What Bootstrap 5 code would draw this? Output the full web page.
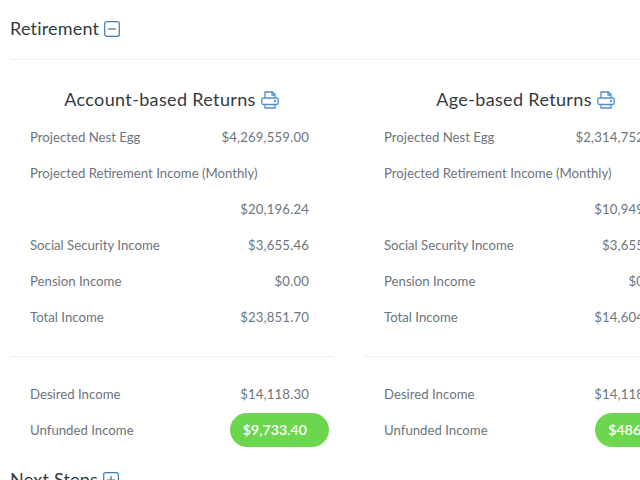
<!DOCTYPE html>
<html lang="en"><head><meta charset="utf-8"><title>Retirement</title>
<link href="https://cdn.jsdelivr.net/npm/bootstrap@5.3.0/dist/css/bootstrap.min.css" rel="stylesheet">
<style>
html,body{height:480px;overflow:hidden;background:#fff}
body{font-family:Lato,"Open Sans",sans-serif;color:#6c757d;font-size:13.2px}
.shell{padding:0 0 0 10px;width:640px;overflow:hidden}
.sec-title{font-size:18px;line-height:24px;color:#343a40;letter-spacing:.2px;font-weight:400;margin:0}
.sec-head{height:60px;border-bottom:1px solid #ebedef;padding-bottom:4px}
.sec-head2{margin-top:19px}
.tog{display:inline-block;vertical-align:-2px;margin-left:0}
.cols{display:flex;gap:30px;width:700px}
.colm{flex:0 0 324px;width:324px}
.colhead{font-size:18px;line-height:24px;color:#343a40;text-align:center;font-weight:400;margin:27px 0 0;letter-spacing:.35px;height:24px;padding-right:1px}
.prt{display:inline-block;vertical-align:-3px;margin-left:0}
.ln{display:flex;justify-content:space-between;height:36px;line-height:36px;padding:0 25px 0 20px;white-space:nowrap}
.ln.first{margin-top:8px}
.amt{letter-spacing:.15px}
.divi{border-top:1px solid #ebedef;margin:21px 0 19px}
.pill{display:inline-block;background:#6dd64f;color:#fff;height:34px;line-height:34px;border-radius:17px;padding:0 22px 0 13px;margin-right:-20px;font-size:14px;letter-spacing:.1px;-webkit-text-stroke:.2px #fff}
.pillwrap{display:flex;align-items:center}
</style></head><body>
<div class="shell">
<div class="sec-head d-flex align-items-center"><h2 class="sec-title">Retirement <svg class="tog" width="16" height="16" viewBox="0 0 16 16" fill="none" stroke="#3c7db5" stroke-width="1.2"><rect x=".7" y=".7" width="14.6" height="14.6" rx="2"/><path d="M4 8h8" stroke="#3f6f99"/></svg></h2></div>
<div class="cols">
<div class="colm">
<h3 class="colhead">Account-based Returns <svg class="prt" width="18" height="18" viewBox="0 0 18 18" fill="none" stroke="#4a90d0" stroke-width="1.3"><path d="M4 7V1h7.5L14 3.5V7"/><path d="M11 1V4h3"/><rect x=".8" y="7" width="16.4" height="6.5" rx="1.5"/><path d="M4 13.5V17h10v-3.5"/><circle cx="14" cy="10" r=".5"/></svg></h3>
<div class="ln first"><span>Projected Nest Egg</span><span class="amt">$4,269,559.00</span></div>
<div class="ln"><span>Projected Retirement Income (Monthly)</span></div>
<div class="ln justify-content-end"><span class="amt">$20,196.24</span></div>
<div class="ln"><span>Social Security Income</span><span class="amt">$3,655.46</span></div>
<div class="ln"><span>Pension Income</span><span class="amt">$0.00</span></div>
<div class="ln"><span>Total Income</span><span class="amt">$23,851.70</span></div>
<div class="divi"></div>
<div class="ln"><span>Desired Income</span><span class="amt">$14,118.30</span></div>
<div class="ln pillwrap"><span>Unfunded Income</span><span class="pill">$9,733.40</span></div>
</div>
<div class="colm">
<h3 class="colhead">Age-based Returns <svg class="prt" width="18" height="18" viewBox="0 0 18 18" fill="none" stroke="#4a90d0" stroke-width="1.3"><path d="M4 7V1h7.5L14 3.5V7"/><path d="M11 1V4h3"/><rect x=".8" y="7" width="16.4" height="6.5" rx="1.5"/><path d="M4 13.5V17h10v-3.5"/><circle cx="14" cy="10" r=".5"/></svg></h3>
<div class="ln first"><span>Projected Nest Egg</span><span class="amt">$2,314,752.00</span></div>
<div class="ln"><span>Projected Retirement Income (Monthly)</span></div>
<div class="ln justify-content-end"><span class="amt">$10,949.24</span></div>
<div class="ln"><span>Social Security Income</span><span class="amt">$3,655.46</span></div>
<div class="ln"><span>Pension Income</span><span class="amt">$0.00</span></div>
<div class="ln"><span>Total Income</span><span class="amt">$14,604.70</span></div>
<div class="divi"></div>
<div class="ln"><span>Desired Income</span><span class="amt">$14,118.30</span></div>
<div class="ln pillwrap"><span>Unfunded Income</span><span class="pill">$486.40</span></div>
</div>
</div>
<h2 class="sec-title sec-head2">Next Steps <svg class="tog" width="16" height="16" viewBox="0 0 16 16" fill="none" stroke="#3c7db5" stroke-width="1.2"><rect x=".7" y=".7" width="14.6" height="14.6" rx="2"/><path d="M4 8h8M8 4v8" stroke="#3f6f99"/></svg></h2>
</div>
<script src="https://cdn.jsdelivr.net/npm/bootstrap@5.3.0/dist/js/bootstrap.bundle.min.js"></script>
</body></html>
